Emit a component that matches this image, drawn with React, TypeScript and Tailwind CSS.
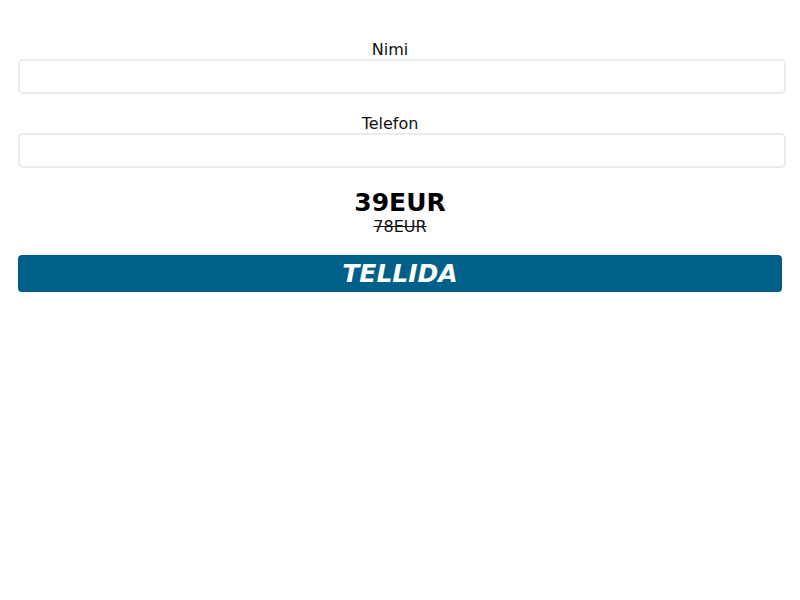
export default function App() {
  const font = { fontFamily: '"DejaVu Sans", sans-serif' };
  return (
    <div className="bg-white w-[800px] h-[600px]" style={font}>
      <div className="px-[18px] pt-[40px] flex flex-col">
        <div className="text-center text-[16px] leading-[19px] text-[#111] mr-[20px]">Nimi</div>
        <div className="h-[35px] w-[768px] border-2 border-[#ebebeb] rounded-[5px] bg-white" />
        <div className="mt-[20px] text-center text-[16px] leading-[19px] text-[#111] mr-[20px]">Telefon</div>
        <div className="h-[35px] w-[768px] border-2 border-[#ebebeb] rounded-[5px] bg-white" />
        <div className="mt-[20px] text-center text-[25px] leading-[29px] font-bold text-black ml-[-36px] mr-[-36px]">39EUR</div>
        <div className="text-center text-[16px] leading-[19px] text-[#111] line-through">78EUR</div>
        <button className="mt-[19px] w-[764px] h-[37px] bg-[#00608a] rounded-[4px] text-white text-[25px] font-bold italic leading-[37px] text-center">
          TELLIDA
        </button>
      </div>
    </div>
  );
}
